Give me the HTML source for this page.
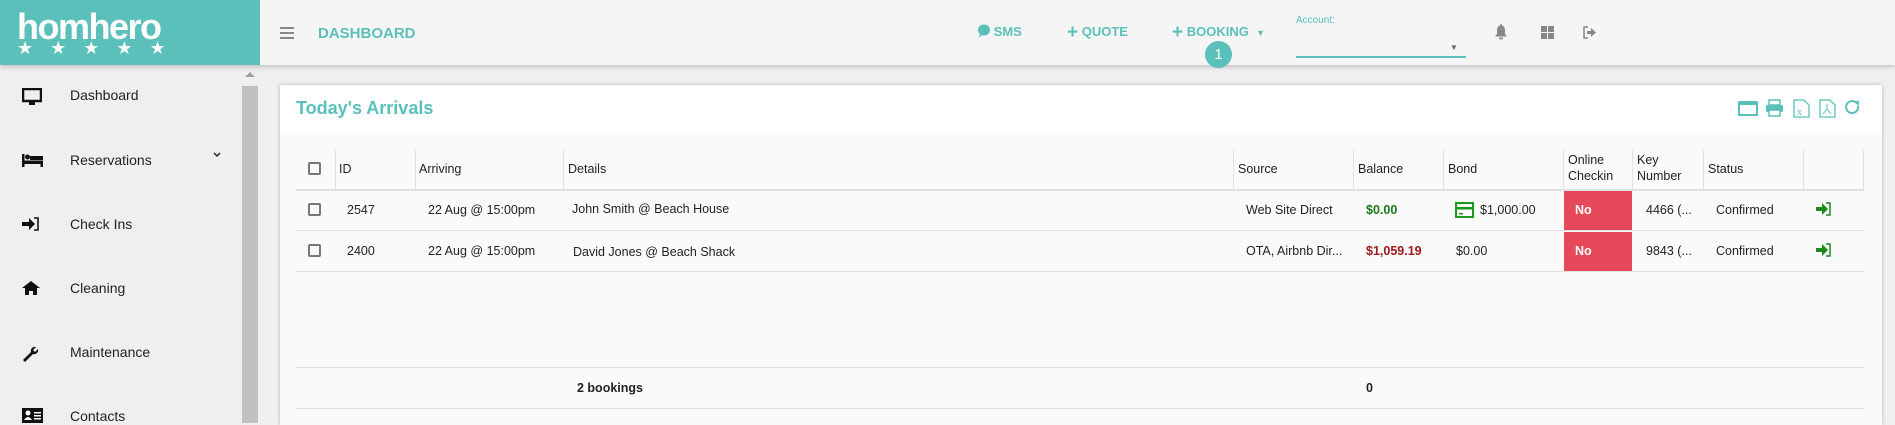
<!DOCTYPE html><html><head><style>
*{box-sizing:border-box;margin:0;padding:0}
body{width:1895px;height:423px;overflow:hidden;background:#f0f0f0;font-family:"Liberation Sans",sans-serif;position:relative;color:#222}
.a{position:absolute}
.hdr{left:0;top:0;width:1895px;height:65px;background:#f5f5f5;box-shadow:0 2px 5px rgba(0,0,0,.2);z-index:2}
.logo{left:0;top:0;width:260px;height:65px;background:#5bbfba}
.t{color:#5bbfba;font-weight:bold;font-size:14px}
.side{left:0;top:65px;width:242px;height:358px;background:#efefef}
.si{position:absolute;left:70px;font-size:14px;color:#222}
.ic{position:absolute;left:22px}
.panel{left:280px;top:85px;width:1602px;height:340px;background:#fafafa;box-shadow:0 0 4px rgba(0,0,0,.25)}
.cell{position:absolute;font-size:12.5px;color:#222;white-space:nowrap}
.vl{position:absolute;width:1px;background:#e3e3e3;top:150px;height:39px}
.hl{position:absolute;left:296px;width:1568px;height:1px;background:#e0e0e0}
.cb{position:absolute;width:13px;height:13px;border:2px solid #777;border-radius:2px}
</style></head><body>
<div class="a hdr">
 <div class="a logo">
  <div class="a" style="left:17px;top:6px;color:#fff;font-size:36px;font-weight:bold;letter-spacing:-1.5px">homhero</div>
  <div class="a" style="left:17px;top:38px;color:#fff;font-size:18px;letter-spacing:17px">★★★★★</div>
 </div>
 <div class="a" style="left:280px;top:27px;width:14px;height:2px;background:#888;box-shadow:0 5px 0 #888,0 10px 0 #888"></div>
 <div class="a t" style="left:318px;top:25px;font-size:15px">DASHBOARD</div>
 <div class="a t" style="left:977px;top:24px;font-size:13px"><svg width="13" height="14" style="vertical-align:-2px"><ellipse cx="7" cy="6" rx="6" ry="5.5" fill="#5bbfba"/><path d="M3 9L2 14L6 10z" fill="#5bbfba"/></svg> SMS</div>
 <div class="a t" style="left:1067px;top:22px;font-size:13px"><b style="font-size:19px;vertical-align:-2px">+</b> QUOTE</div>
 <div class="a t" style="left:1172px;top:22px;font-size:13px"><b style="font-size:19px;vertical-align:-2px">+</b> BOOKING &nbsp;<span style="font-size:9px">▼</span></div>
 <div class="a" style="left:1205px;top:41px;width:27px;height:27px;border-radius:50%;background:#5bbfba;color:#fff;font-size:15px;text-align:center;line-height:27px">1</div>
 <div class="a" style="left:1296px;top:15px;color:#5bbfba;font-size:10px">Account:</div>
 <div class="a" style="left:1450px;top:43px;color:#666;font-size:8px">▼</div>
 <div class="a" style="left:1296px;top:56px;width:170px;height:2px;background:#5bbfba"></div>
 <svg class="a" style="left:1494px;top:24px" width="14" height="16" viewBox="0 0 14 16"><path d="M7 0c1 0 1 1 1 1.5C10.5 2 11 4 11 7v3l2 2.5H1L3 10V7c0-3 .5-5 3-5.5C6 1 6 0 7 0zM5 13.5h4a2 2 0 0 1-4 0z" fill="#888"/></svg>
 <svg class="a" style="left:1541px;top:26px" width="14" height="13"><rect x="0" y="0" width="6" height="6" fill="#888"/><rect x="7" y="0" width="6" height="6" fill="#888"/><rect x="0" y="7" width="6" height="6" fill="#888"/><rect x="7" y="7" width="6" height="6" fill="#888"/></svg>
 <svg class="a" style="left:1583px;top:26px" width="14" height="13"><path d="M5 1H1v11h4" stroke="#888" fill="none" stroke-width="1.5"/><path d="M4 5h4V2l5 4.5-5 4.5V8H4z" fill="#888"/></svg>
</div>
<div class="a side">
 <svg class="ic" style="top:23px" width="20" height="18"><rect x="1" y="1" width="18" height="12" fill="none" stroke="#111" stroke-width="2.5"/><rect x="7" y="13" width="6" height="4" fill="#111"/></svg>
 <div class="si" style="top:22px">Dashboard</div>
 <svg class="ic" style="top:89px" width="21" height="14"><rect x="0" y="0" width="2.5" height="13" fill="#111"/><circle cx="5.5" cy="3" r="2.5" fill="#111"/><rect x="8" y="2" width="13" height="4" fill="#111"/><rect x="0" y="6.5" width="21" height="3.5" fill="#111"/><rect x="18.5" y="7" width="2.5" height="6" fill="#111"/></svg>
 <div class="si" style="top:87px">Reservations</div>
 <svg class="a" style="left:213px;top:87px" width="8" height="6"><path d="M1 1l3 3 3-3" stroke="#222" stroke-width="1.5" fill="none"/></svg>
 <svg class="ic" style="top:152px" width="18" height="14"><path d="M0 5h7V1l6 6-6 6V9H0z" fill="#111"/><path d="M12 1h4v12h-4" stroke="#111" stroke-width="1.6" fill="none"/></svg>
 <div class="si" style="top:151px">Check Ins</div>
 <svg class="ic" style="top:216px" width="18" height="14"><path d="M9 0l9 7h-3v7h-4v-4H7v4H3V7H0z" fill="#111"/></svg>
 <div class="si" style="top:215px">Cleaning</div>
 <svg class="ic" style="top:279px" width="18" height="18"><path d="M1 16l8-8a4 4 0 0 1 5-5l-3 3 2 2 3-3a4 4 0 0 1-5 5l-8 8z" fill="#111"/></svg>
 <div class="si" style="top:279px">Maintenance</div>
 <svg class="ic" style="top:343px" width="21" height="15"><rect x="0" y="0" width="21" height="15" fill="#111"/><circle cx="6" cy="5" r="2.5" fill="#fff"/><path d="M2 12q4-6 8 0z" fill="#fff"/><rect x="12" y="4" width="7" height="1.5" fill="#fff"/><rect x="12" y="7" width="7" height="1.5" fill="#fff"/><rect x="12" y="10" width="7" height="1.5" fill="#fff"/></svg>
 <div class="si" style="top:343px">Contacts</div>
</div>
<div class="a" style="left:242px;top:65px;width:17px;height:358px;background:#f0f0f0"></div>
<div class="a" style="left:242px;top:86px;width:16px;height:337px;background:#c1c1c1"></div>
<div class="a" style="left:245px;top:72px;width:0;height:0;border-left:5px solid transparent;border-right:5px solid transparent;border-bottom:5px solid #a0a0a0"></div>
<div class="a panel"></div>
<div class="a" style="left:280px;top:85px;width:1602px;height:47px;background:#fff"></div>
<div class="a t" style="left:296px;top:98px;font-size:18px">Today's Arrivals</div>
<svg class="a" style="left:1738px;top:99px" width="125" height="19">
 <rect x="0" y="2" width="20" height="15" rx="1" fill="#5bbfba"/><rect x="2" y="6" width="16" height="9" fill="#fff"/>
 <rect x="31" y="1" width="11" height="5" fill="none" stroke="#5bbfba" stroke-width="1.5"/><rect x="28" y="6" width="17" height="7" rx="1.5" fill="#5bbfba"/><rect x="31" y="11" width="11" height="6" fill="#fff" stroke="#5bbfba" stroke-width="1.5"/>
 <path d="M56 1h10l5 5v12H56z" fill="none" stroke="#5bbfba" stroke-width="1.3"/><text x="59" y="16" font-size="10" fill="#5bbfba" font-family="Liberation Serif">x</text>
 <path d="M82 1h10l5 5v12H82z" fill="none" stroke="#5bbfba" stroke-width="1.3"/><path d="M89 5v5l-4 5m4-5l4 5" stroke="#5bbfba" fill="none"/>
 <path d="M120 7a6 6 0 1 1-2-3.5" stroke="#5bbfba" stroke-width="2" fill="none"/><path d="M115 2h6v5z" fill="#5bbfba"/>
</svg>
<div class="vl" style="left:335px"></div><div class="vl" style="left:415px"></div><div class="vl" style="left:563px"></div><div class="vl" style="left:1233px"></div><div class="vl" style="left:1353px"></div><div class="vl" style="left:1443px"></div><div class="vl" style="left:1563px"></div><div class="vl" style="left:1632px"></div><div class="vl" style="left:1703px"></div><div class="vl" style="left:1803px"></div><div class="vl" style="left:1863px"></div>
<div class="hl" style="top:189px;height:2px"></div><div class="hl" style="top:230px"></div><div class="hl" style="top:271px"></div><div class="hl" style="top:367px"></div><div class="hl" style="top:408px"></div>
<div class="a" style="left:1564px;top:191px;width:68px;height:39px;background:#e5495a"></div>
<div class="a" style="left:1564px;top:232px;width:68px;height:39px;background:#e5495a"></div>
<div class="cb" style="left:308px;top:162px"></div><div class="cb" style="left:308px;top:203px"></div><div class="cb" style="left:308px;top:244px"></div>
<div class="cell" style="left:339px;top:162px">ID</div>
<div class="cell" style="left:419px;top:162px">Arriving</div>
<div class="cell" style="left:568px;top:162px">Details</div>
<div class="cell" style="left:1238px;top:162px">Source</div>
<div class="cell" style="left:1358px;top:162px">Balance</div>
<div class="cell" style="left:1448px;top:162px">Bond</div>
<div class="cell" style="left:1568px;top:152px;line-height:16px">Online<br>Checkin</div>
<div class="cell" style="left:1637px;top:152px;line-height:16px">Key<br>Number</div>
<div class="cell" style="left:1708px;top:162px">Status</div>
<div class="cell" style="left:347px;top:203px">2547</div>
<div class="cell" style="left:428px;top:203px">22 Aug @ 15:00pm</div>
<div class="cell" style="left:572px;top:202px">John Smith @ Beach House</div>
<div class="cell" style="left:1246px;top:203px">Web Site Direct</div>
<div class="cell" style="left:1366px;top:203px;color:#1a7a1a;font-weight:bold">$0.00</div>
<svg class="a" style="left:1455px;top:202px" width="19" height="16"><rect x="1" y="1" width="17" height="14" fill="none" stroke="#1a9a1a" stroke-width="2"/><rect x="1" y="5" width="17" height="2.5" fill="#1a9a1a"/><rect x="4" y="11" width="4" height="1.5" fill="#1a9a1a"/></svg>
<div class="cell" style="left:1480px;top:203px">$1,000.00</div>
<div class="cell" style="left:1575px;top:203px;color:#fff;font-weight:bold">No</div>
<div class="cell" style="left:1646px;top:203px">4466 (...</div>
<div class="cell" style="left:1716px;top:203px">Confirmed</div>
<div class="cell" style="left:347px;top:244px">2400</div>
<div class="cell" style="left:428px;top:244px">22 Aug @ 15:00pm</div>
<div class="cell" style="left:573px;top:245px">David Jones @ Beach Shack</div>
<div class="cell" style="left:1246px;top:244px">OTA, Airbnb Dir...</div>
<div class="cell" style="left:1366px;top:244px;color:#a01818;font-weight:bold">$1,059.19</div>
<div class="cell" style="left:1456px;top:244px">$0.00</div>
<div class="cell" style="left:1575px;top:244px;color:#fff;font-weight:bold">No</div>
<div class="cell" style="left:1646px;top:244px">9843 (...</div>
<div class="cell" style="left:1716px;top:244px">Confirmed</div>
<svg class="a" style="left:1816px;top:202px" width="16" height="15"><path d="M0 5h6V1l6 6-6 6V9H0z" fill="#1a8a1a"/><path d="M10 1h4v12h-4" stroke="#1a8a1a" stroke-width="1.5" fill="none"/></svg>
<svg class="a" style="left:1816px;top:243px" width="16" height="15"><path d="M0 5h6V1l6 6-6 6V9H0z" fill="#1a8a1a"/><path d="M10 1h4v12h-4" stroke="#1a8a1a" stroke-width="1.5" fill="none"/></svg>
<div class="cell" style="left:577px;top:381px;font-weight:bold">2 bookings</div>
<div class="cell" style="left:1366px;top:381px;font-weight:bold">0</div>
</body></html>
